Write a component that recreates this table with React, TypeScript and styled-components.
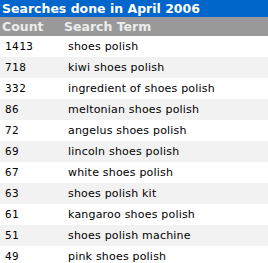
import styled, { createGlobalStyle } from "styled-components";

const Global = createGlobalStyle`
    body {
        margin: 0;
        background: #ffffff;
        font-family: "DejaVu Sans", Verdana, sans-serif;
    }
`;

const Panel = styled.div`
    width: 268px;
`;

const Title = styled.div`
    height: 17px;
    line-height: 18px;
    padding-left: 2px;
    background-color: #0066cc;
    color: #ffffff;
    font-size: 12.5px;
    font-weight: 700;
    white-space: nowrap;
`;

const Table = styled.div`
    display: grid;
    grid-template-columns: 62px 1fr;
`;

const HeadCell = styled.div`
    height: 19px;
    line-height: 19px;
    padding-left: 2px;
    background-color: #999999;
    color: #ececec;
    font-size: 12.5px;
    font-weight: 700;
    white-space: nowrap;
`;

const Cell = styled.div<{ $alt: boolean; $mono?: boolean }>`
    height: 21px;
    line-height: 21px;
    padding-left: ${props => (props.$mono ? "5px" : "6px")};
    background-color: ${props => (props.$alt ? "#f2f2f2" : "#ffffff")};
    color: #000000;
    font-family: ${props => (props.$mono ? `"DejaVu Sans Mono", monospace` : `"DejaVu Sans", Verdana, sans-serif`)};
    font-size: 11px;
    letter-spacing: ${props => (props.$mono ? "0.5px" : "0.2px")};
    white-space: nowrap;
`;

const rows: [number, string][] = [
    [1413, "shoes polish"],
    [718, "kiwi shoes polish"],
    [332, "ingredient of shoes polish"],
    [86, "meltonian shoes polish"],
    [72, "angelus shoes polish"],
    [69, "lincoln shoes polish"],
    [67, "white shoes polish"],
    [63, "shoes polish kit"],
    [61, "kangaroo shoes polish"],
    [51, "shoes polish machine"],
    [49, "pink shoes polish"],
];

function App() {
    return (
        <Panel>
            <Global />
            <Title>Searches done in April 2006</Title>
            <Table>
                <HeadCell>Count</HeadCell>
                <HeadCell>Search Term</HeadCell>
                {rows.map(([count, term], i) => [
                    <Cell key={"c" + i} $alt={i % 2 === 1} $mono>{count}</Cell>,
                    <Cell key={"t" + i} $alt={i % 2 === 1}>{term}</Cell>,
                ])}
            </Table>
        </Panel>
    );
}

export default App;
